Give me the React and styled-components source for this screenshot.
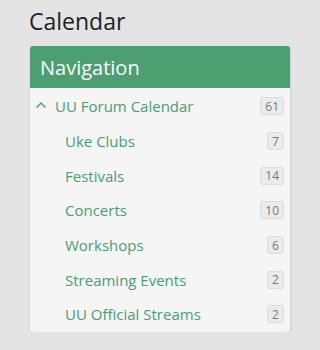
import styled, { createGlobalStyle } from 'styled-components';

const GlobalStyle = createGlobalStyle`
  html, body {
    margin: 0;
    padding: 0;
    background: #e4e4e4;
    font-family: "Open Sans", "Liberation Sans", sans-serif;
  }
`;

const categories = [
  { name: 'Uke Clubs', count: 7 },
  { name: 'Festivals', count: 14 },
  { name: 'Concerts', count: 10 },
  { name: 'Workshops', count: 6 },
  { name: 'Streaming Events', count: 2 },
  { name: 'UU Official Streams', count: 2 },
];

const App = () => {
  return (
    <Page>
      <GlobalStyle />
      <PageTitle>Calendar</PageTitle>
      <Panel>
        <PanelHeader>Navigation</PanelHeader>
        <PanelBody>
          <Row>
            <Chevron viewBox="0 0 10 6">
              <path d="M0.6 5.4 L5 1 L9.4 5.4" />
            </Chevron>
            <RowLink>UU Forum Calendar</RowLink>
            <Badge>61</Badge>
          </Row>
          {categories.map(cat => (
            <Row key={cat.name} $indent>
              <RowLink>{cat.name}</RowLink>
              <Badge>{cat.count}</Badge>
            </Row>
          ))}
        </PanelBody>
      </Panel>
    </Page>
  );
};

const Page = styled.div`
  padding: 4px 10px 0 30px;
  width: 260px;
`;

const PageTitle = styled.h1`
  margin: 0 0 8px -1px;
  font-size: 23px;
  font-weight: 400;
  line-height: 34px;
  color: #222;
`;

const Panel = styled.div`
  background: #f5f5f5;
  border-radius: 3px;
  box-shadow: 0 1px 2px rgba(0, 0, 0, 0.12), 1px 0 1px rgba(0, 0, 0, 0.06);
  overflow: hidden;
`;

const PanelHeader = styled.div`
  height: 42px;
  display: flex;
  align-items: center;
  padding: 0 10px;
  background: #4b9f71;
  color: #fff;
  font-size: 20px;
`;

const PanelBody = styled.div`
  padding: 1px 0 0;
`;

const Row = styled.div`
  display: flex;
  align-items: center;
  height: 34.7px;
  padding: 0 6px 0 ${p => (p.$indent ? '35px' : '6px')};
`;

const Chevron = styled.svg`
  width: 10px;
  height: 6px;
  margin: 0 9px 2px 0;
  fill: none;
  stroke: #45a074;
  stroke-width: 1.4;
`;

const RowLink = styled.span`
  flex: 1;
  font-size: 15px;
  color: #45a074;
  white-space: nowrap;
`;

const Badge = styled.span`
  min-width: 17px;
  height: 18px;
  box-sizing: border-box;
  padding: 0 4px;
  display: flex;
  align-items: center;
  justify-content: center;
  background: #ebebeb;
  border: 1px solid #dcdcdc;
  border-radius: 3px;
  font-size: 12px;
  color: #7a7a7a;
`;

export default App;
